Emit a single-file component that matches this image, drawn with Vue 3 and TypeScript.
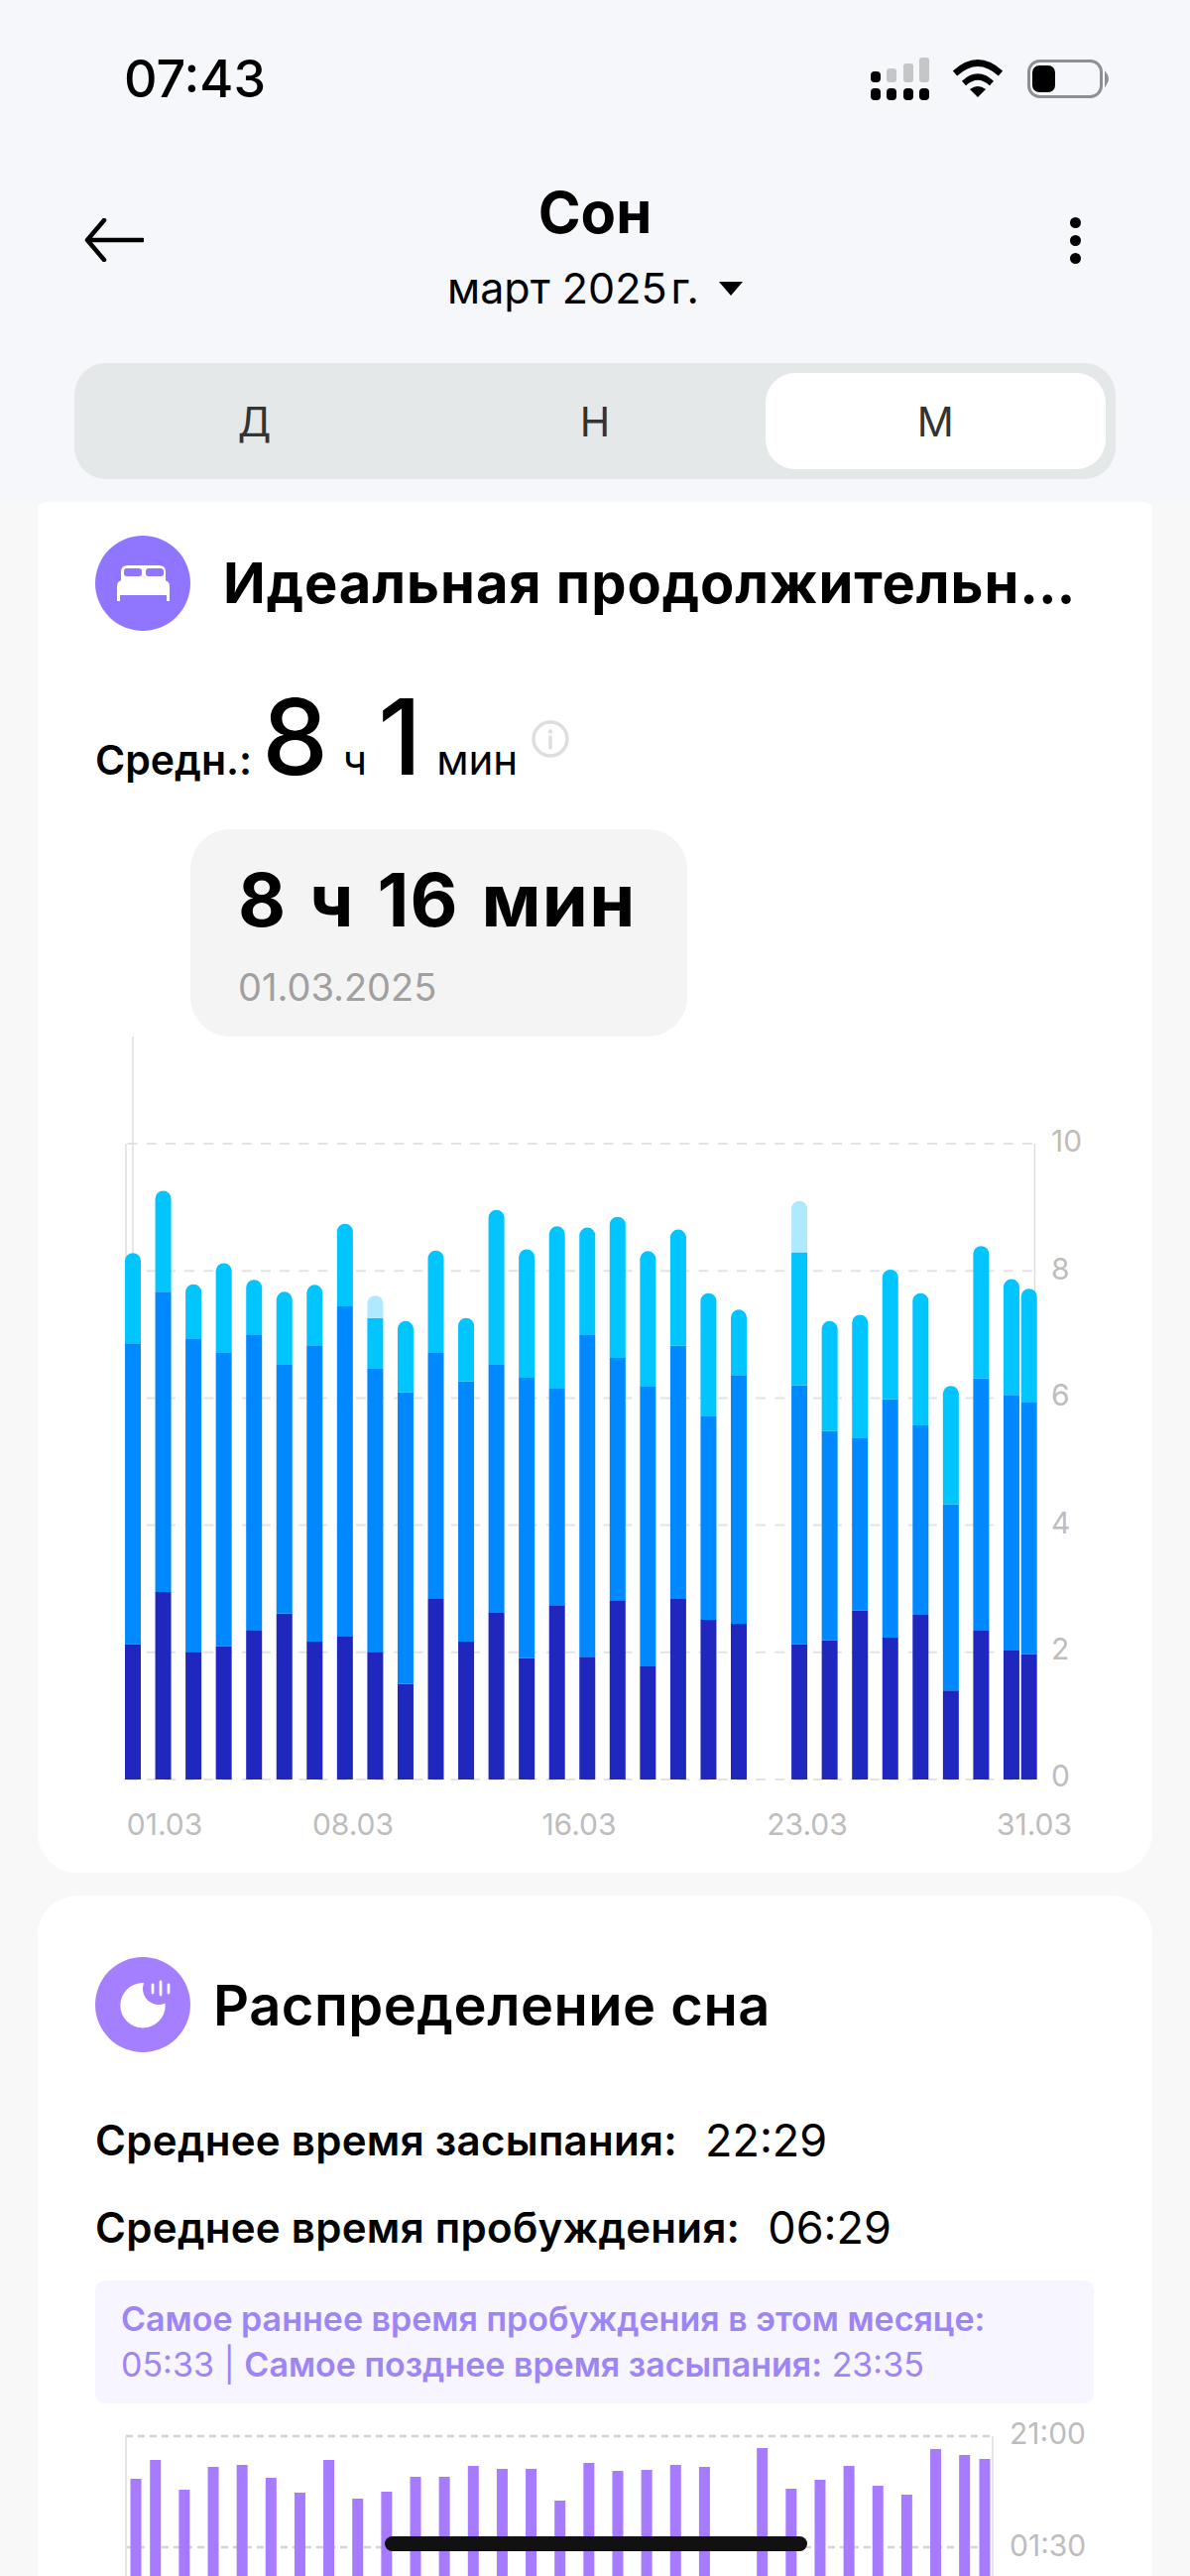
<template>
  <div class="page">
    <!-- Верхняя часть: статус, заголовок, переключатель -->
    <header class="top">
      <div class="status">
        <span class="clock">07:43</span>
        <svg class="status-icons" width="250" height="50" viewBox="870 55 250 50">
          <rect v-for="x in [878, 894, 911, 927]" :key="x" :x="x" y="89" width="10" height="12" rx="4" fill="#000" />
          <rect x="878" y="72" width="10" height="11" rx="4" fill="#000" />
          <rect x="894" y="69" width="10" height="14" rx="3" fill="#c4c6c8" />
          <rect x="911" y="64" width="10" height="19" rx="3" fill="#c4c6c8" />
          <rect x="927" y="58" width="10" height="25" rx="3" fill="#c4c6c8" />
          <path d="M963 74 Q986 53 1009 74" fill="none" stroke="#000" stroke-width="6.5" />
          <path d="M972 84 Q986 71 1000 84" fill="none" stroke="#000" stroke-width="6" />
          <path d="M978 90 Q986 84 994 90 L986 98 Z" fill="#000" />
          <rect x="1037.5" y="61.5" width="73" height="36" rx="11" fill="none" stroke="#8e8e93" stroke-width="3" />
          <rect x="1041" y="66" width="23" height="27" rx="7" fill="#000" />
          <path d="M1115 74 Q1119 79 1115 85 Z" fill="#8e8e93" stroke="#8e8e93" stroke-width="2" />
        </svg>
      </div>

      <div class="nav">
        <svg class="back" width="60" height="44" viewBox="0 0 60 44">
          <path d="M59 22 H4 M20 2 L3 22 L20 42" fill="none" stroke="#000" stroke-width="4.5" stroke-linecap="round" stroke-linejoin="round" />
        </svg>
        <div class="nav-title">
          <div class="title">Сон</div>
          <div class="month">март 2025&#8202;г.<i class="caret"></i></div>
        </div>
        <div class="more"><i></i><i></i><i></i></div>
      </div>

      <div class="segments">
        <div v-for="s in segments" :key="s" class="segment" :class="{ active: s === 'М' }">{{ s }}</div>
      </div>
    </header>

    <main class="content">
      <!-- Идеальная продолжительность -->
      <section class="card first">
        <div class="card-head">
          <svg class="card-icon" width="96" height="96" viewBox="0 0 96 96">
            <circle cx="48" cy="48" r="48" fill="#8f75ff" />
            <path d="M26 46 V36 Q26 30 33 30 H64 Q71 30 71 36 V46 Z" fill="#fff" />
            <rect x="29" y="33" width="18" height="8" rx="3" fill="#8f75ff" />
            <rect x="51" y="33" width="18" height="8" rx="3" fill="#8f75ff" />
            <path d="M22 51 Q22 45 28 45 H69 Q75 45 75 51 V66 H72 V60 H25 V66 H22 Z" fill="#fff" />
          </svg>
          <h2 class="card-title">Идеальная продолжительн…</h2>
        </div>

        <div class="average">
          <span class="average-label">Средн.:</span>
          <span class="big">8</span><span class="unit">ч</span>
          <span class="big">1</span><span class="unit">мин</span>
          <svg class="info" width="38" height="38" viewBox="0 0 38 38">
            <circle cx="19" cy="19" r="17" fill="none" stroke="#dedede" stroke-width="3.5" />
            <circle cx="19" cy="11.5" r="2.2" fill="#dedede" />
            <path d="M19 17 V28" stroke="#dedede" stroke-width="3.5" stroke-linecap="round" />
          </svg>
        </div>

        <div class="tip">
          <div class="tip-value">8 ч 16 мин</div>
          <div class="tip-date">01.03.2025</div>
        </div>

        <svg class="chart" width="1124" height="843" viewBox="38 1045 1124 843">
          <path v-for="y in gridY" :key="y" :d="`M128.5 ${y} H1043`" class="grid" />
          <path d="M127 1153 V1794 M1043.5 1153 V1794" class="axis" />
          <path d="M134 1045 V1794" class="axis" />
          <g v-for="bar in bars" :key="bar.key">
            <path v-for="seg in bar.segs" :key="seg.color" :d="seg.d" :fill="seg.color" />
          </g>
          <text v-for="l in yLabels" :key="l.text" x="1060" :y="l.y" class="tick">{{ l.text }}</text>
          <text v-for="l in xLabels" :key="l.text" :x="l.x" y="1850" class="tick" text-anchor="middle">{{ l.text }}</text>
        </svg>
      </section>

      <!-- Распределение сна -->
      <section class="card second">
        <div class="card-head">
          <svg class="card-icon" width="96" height="96" viewBox="0 0 96 96">
            <circle cx="48" cy="48" r="48" fill="#a47fff" />
            <circle cx="48" cy="48.7" r="22.7" fill="#fff" />
            <circle cx="64" cy="32" r="16" fill="#a47fff" />
            <path d="M58 28 V36 M66 25 V38 M74 28 V36" stroke="#fff" stroke-width="2.8" stroke-linecap="round" />
          </svg>
          <h2 class="card-title short">Распределение сна</h2>
        </div>

        <div class="time-row first-row"><b>Среднее время засыпания:</b><span>22:29</span></div>
        <div class="time-row"><b>Среднее время пробуждения:</b><span>06:29</span></div>

        <div class="notice">
          <div><b>Самое раннее время пробуждения в этом месяце:</b></div>
          <div>05:33 | <b>Самое позднее время засыпания:</b> 23:35</div>
        </div>

        <svg class="chart" width="1124" height="160" viewBox="38 2437 1124 160">
          <path d="M127 2455 H1001" class="grid small" />
          <path d="M127 2567 H1001" class="grid small" />
          <path d="M127 2455 V2597 M1001 2455 V2597" class="axis" />
          <rect v-for="b in sleepBars" :key="b.x" :x="b.x - 5.5" :y="b.y" width="11" :height="2597 - b.y" fill="#a77bff" />
          <text x="1018" y="2463" class="tick">21:00</text>
          <text x="1018" y="2576" class="tick">01:30</text>
        </svg>
      </section>
    </main>

    <div class="home-bar"></div>
  </div>
</template>

<script setup lang="ts">
type Segment = { d: string, color: string }

const segments = ['Д', 'Н', 'М']

// Верхние границы сегментов в часах: глубокий, лёгкий, быстрый, бодрствование
const stages: (number[] | null)[] = [
  [2.13, 6.86, 8.28], [2.95, 7.67, 9.26], [2.01, 6.94, 7.79], [2.10, 6.72, 8.12],
  [2.35, 6.99, 7.86], [2.61, 6.52, 7.67], [2.17, 6.83, 7.78], [2.26, 7.44, 8.74],
  [2.01, 6.46, 7.26, 7.61], [1.50, 6.09, 7.21], [2.85, 6.71, 8.32], [2.17, 6.26, 7.26],
  [2.62, 6.52, 8.96], [1.91, 6.32, 8.34], [2.74, 6.16, 8.70], [1.93, 6.99, 8.68],
  [2.82, 6.63, 8.85], [1.78, 6.19, 8.31], [2.85, 6.82, 8.65], [2.51, 5.72, 7.65],
  [2.45, 6.36, 7.39], null, [2.13, 6.20, 8.29, 9.10], [2.19, 5.48, 7.21],
  [2.66, 5.38, 7.31], [2.23, 5.98, 8.02], [2.59, 5.57, 7.65], [1.40, 4.33, 6.19],
  [2.34, 6.31, 8.39], [2.03, 6.05, 7.87], [1.97, 5.93, 7.72]
]

const colors = ['#1f27bf', '#0088ff', '#00c5ff', '#ade9ff']
const baseY = 1794
const unit = 64.1
const barW = 16

const bars = stages.flatMap((tops, i) => {
  if (!tops) return []
  // Последний столбец прижат к правой оси
  const cx = i === 30 ? 1037.7 : 134 + 30.55 * i
  const l = cx - barW / 2
  const r = cx + barW / 2
  const segs: Segment[] = tops.map((top, k) => {
    const y1 = baseY - top * unit
    const y2 = baseY - (k ? tops[k - 1] : 0) * unit
    const d = k === tops.length - 1
      ? `M${l} ${y2} V${y1 + 8} A8 8 0 0 1 ${r} ${y1 + 8} V${y2} Z`
      : `M${l} ${y2} V${y1} H${r} V${y2} Z`
    return { d, color: colors[k] }
  })
  return [{ key: i, segs }]
})

const gridY = [0, 2, 4, 6, 8, 10].map(v => baseY - v * unit)
const yLabels = [
  { text: '10', y: 1161 }, { text: '8', y: 1290 }, { text: '6', y: 1417 },
  { text: '4', y: 1546 }, { text: '2', y: 1673 }, { text: '0', y: 1801 }
]
const xLabels = [
  { text: '01.03', x: 166 }, { text: '08.03', x: 356 }, { text: '16.03', x: 584 },
  { text: '23.03', x: 814 }, { text: '31.03', x: 1043 }
]

// Вершины столбцов нижнего графика
const sleepTops = [
  2498, 2479, 2509, 2486, 2484, 2497, 2512, 2479, 2518, 2511, 2496, 2496, 2485, 2488, 2488,
  2520, 2482, 2490, 2489, 2484, 2486, 0, 2467, 2508, 2499, 2485, 2505, 2514, 2468, 2474, 2478
]
const sleepBars = sleepTops.flatMap((y, i) => {
  if (!y) return []
  let x = 127.6 + 29.14 * i
  if (i === 0) x = 137
  if (i === 30) x = 993
  return [{ x, y }]
})
</script>

<style>
html, body {
  margin: 0;
  background: #f8f8f8;
}
</style>

<style scoped>
.page {
  position: relative;
  width: 1200px;
  height: 2597px;
  overflow: hidden;
  font-family: Inter, "Liberation Sans", sans-serif;
  color: #000;
  background: #f8f8f8;
}

.top {
  height: 506px;
  background: #f5f7fb;
  box-sizing: border-box;
  overflow: hidden;
}

.status {
  display: flex;
  justify-content: space-between;
  align-items: center;
  height: 50px;
  padding: 55px 80px 0 125px;
}

.clock {
  font-size: 52px;
  font-weight: 500;
  line-height: 50px;
}

.status-icons {
  display: block;
}

.nav {
  display: grid;
  grid-template-columns: 1fr auto 1fr;
  align-items: center;
  margin-top: 74px;
  padding: 0 110px;
}

.back {
  margin: 0 0 16px -25px;
}

.nav-title {
  text-align: center;
}

.title {
  font-size: 58px;
  font-weight: 700;
  line-height: 70px;
}

.month {
  font-size: 43px;
  line-height: 62px;
  margin-top: 10px;
  white-space: nowrap;
}

.caret {
  display: inline-block;
  margin-left: 20px;
  margin-bottom: 8px;
  border-left: 12px solid transparent;
  border-right: 12px solid transparent;
  border-top: 14px solid #000;
}

.more {
  display: flex;
  flex-direction: column;
  justify-self: end;
  gap: 7px;
  margin-bottom: 16px;
}

.more i {
  width: 11px;
  height: 11px;
  border-radius: 50%;
  background: #000;
}

.segments {
  display: grid;
  grid-template-columns: repeat(3, 1fr);
  margin: 45px 75px 0;
  padding: 10px;
  height: 97px;
  border-radius: 32px;
  background: #e5e8e9;
}

.segment {
  display: grid;
  place-items: center;
  font-size: 41px;
  color: #333;
  border-radius: 30px;
}

.segment.active {
  background: #fff;
}

.content {
  padding: 0 38px;
}

.card {
  background: #fff;
  overflow: hidden;
}

.card.first {
  height: 1382px;
  border-radius: 8px 8px 40px 40px;
}

.card.second {
  margin-top: 23px;
  height: 700px;
  border-radius: 40px 40px 0 0;
}

.card-head {
  display: flex;
  align-items: center;
  gap: 33px;
  padding: 34px 58px 0;
}

.second .card-head {
  gap: 23px;
  padding-top: 62px;
}

.card-icon {
  display: block;
  flex: none;
}

.card-title {
  margin: 0;
  font-size: 56px;
  font-weight: 700;
  line-height: 74px;
  letter-spacing: 0.95px;
  white-space: nowrap;
}

.card-title.short {
  font-weight: 600;
  letter-spacing: 0.5px;
  padding-top: 2px;
}

.average {
  display: flex;
  align-items: baseline;
  height: 153px;
  margin-top: 47px;
  padding-left: 58px;
}

.average-label {
  font-size: 41px;
  font-weight: 600;
  margin-right: 10px;
}

.big {
  font-size: 106px;
  font-weight: 500;
  line-height: 120px;
  letter-spacing: 4px;
}

.unit {
  font-size: 42px;
  margin: 0 11px;
}

.info {
  align-self: flex-start;
  margin-top: 43px;
  margin-left: 3px;
}

.tip {
  box-sizing: border-box;
  width: 501px;
  height: 209px;
  margin-left: 154px;
  padding: 29px 48px 0;
  border-radius: 40px;
  background: #f4f4f4;
}

.tip-value {
  font-size: 74px;
  font-weight: 700;
  line-height: 84px;
  letter-spacing: 1.2px;
  word-spacing: 4px;
  white-space: nowrap;
}

.tip-date {
  font-size: 38px;
  line-height: 48px;
  margin-top: 22px;
  color: #a0a0a0;
}

.chart {
  display: block;
  overflow: visible;
}

.grid {
  fill: none;
  stroke: #e3e3e3;
  stroke-width: 2;
  stroke-dasharray: 10 9.2;
}

.grid.small {
  stroke: #d4d4d4;
  stroke-width: 2.5;
  stroke-dasharray: 7 5;
}

.axis {
  fill: none;
  stroke: #dedede;
  stroke-width: 1.5;
}

.tick {
  font-size: 30px;
  fill: #bdbdbd;
}

.time-row {
  display: flex;
  gap: 28px;
  padding-left: 58px;
  font-size: 42px;
  line-height: 54px;
  margin-top: 34px;
}

.first-row {
  margin-top: 62px;
}

.time-row b {
  font-weight: 600;
  letter-spacing: 0.3px;
}

.time-row span {
  font-size: 45px;
}

.notice {
  box-sizing: border-box;
  height: 124px;
  margin: 26px 59px 0 58px;
  padding: 16px 26px 0;
  border-radius: 10px;
  background: #f7f5ff;
  color: #9d85f5;
  font-size: 34px;
  line-height: 46px;
}

.notice b {
  font-weight: 600;
}

.second .chart {
  margin-top: 15px;
}

.home-bar {
  position: absolute;
  left: 388px;
  top: 2557px;
  width: 426px;
  height: 15px;
  border-radius: 8px;
  background: #111;
}
</style>
